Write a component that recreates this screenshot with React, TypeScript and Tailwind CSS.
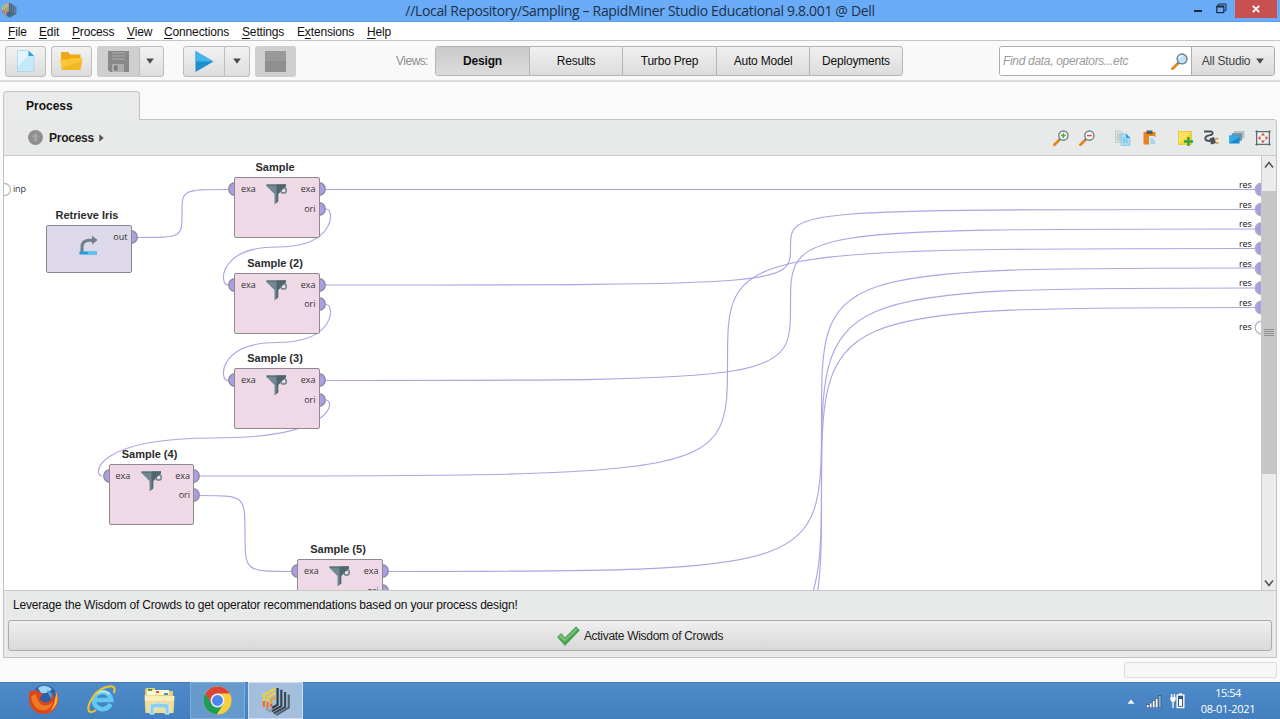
import React from "react";

type Port = { label: string; dy: number };

type NodeProps = {
  title: string;
  x: number;
  y: number;
  kind: "retrieve" | "sample";
};

function AppLogo({ size, dim }: { size: number; dim?: boolean }) {
  return (
    <svg width={size} height={size} viewBox="0 0 32 32" opacity={dim ? 0.85 : 1}>
      {dim && <path d="M16 1 L30 9 V23 L16 31 L2 23 V9 Z" fill="#7d98a8" opacity="0.7" />}
      <g fill="none" strokeWidth="2.3">
        <path d="M3 16 V9.5 L15.5 2.5" stroke="#f5d02c" />
        <path d="M3 16 V22.5" stroke="#ee6a25" />
        <path d="M7 17 V12 L15.5 7.2" stroke="#f7cf2a" />
        <path d="M7 17 V24" stroke="#ee7228" />
        <path d="M11 19 V14.6 L15.5 12" stroke="#f0a028" />
        <path d="M11 19 V22" stroke="#e8502c" />
        <path d="M17.7 2 V20 L12 23.5" stroke="#2c3843" />
        <path d="M21.7 4 V21.5 L11.5 27" stroke="#33414d" />
        <path d="M25.7 6.5 V22.5 L13.5 29.2" stroke="#3a4854" />
        <path d="M29.6 9 V23.2 L16 31" stroke="#55636f" />
      </g>
      <path d="M5 24.5 L11 28 M9 24 L12 25.5" stroke="#8c989f" strokeWidth="1.5" />
    </svg>
  );
}

function Magnifier({ size, sign }: { size: number; sign?: "plus" | "minus" }) {
  return (
    <svg width={size} height={size} viewBox="0 0 16 16">
      <path d="M1.4 14.8 L6.4 9.8" stroke="#e08a1e" strokeWidth="2.7" strokeLinecap="round" />
      <path d="M6 10.2 L7.6 8.6" stroke="#6b7d88" strokeWidth="1.6" />
      <circle cx="10.4" cy="5.6" r="4.6" fill={sign ? "#f4f7f6" : "#bfe3fa"} stroke="#71838d" strokeWidth="1.4" />
      {sign === "plus" && <path d="M10.4 3.2 V8 M8 5.6 H12.8" stroke="#55a63a" strokeWidth="1.5" />}
      {sign === "minus" && <path d="M8 5.6 H12.8" stroke="#e04a3c" strokeWidth="1.5" />}
      {!sign && <path d="M7.5 5 A3.2 3.2 0 0 1 11 2.6" stroke="#eef8ff" strokeWidth="1.3" fill="none" />}
    </svg>
  );
}

function Caret() {
  return (
    <svg width="8" height="6" viewBox="0 0 8 6">
      <path d="M0.2 0.5 H7.8 L4 5.7 Z" fill="#4a4a4a" />
    </svg>
  );
}

function Funnel() {
  return (
    <svg width="22" height="21" viewBox="0 0 22 21">
      <path d="M0.5 0.5 H20 V2 L12.2 10 V17.5 L8.5 20.5 V10 L0.5 2 Z" fill="#708991" />
      <path d="M10.5 0.5 H20 V2 L12.2 10 V17.5 L10.5 19 Z" fill="#50666f" />
      <path d="M0.5 0.5 H20 V2 H0.5 Z" fill="#5b737c" />
      <ellipse cx="17.6" cy="6.4" rx="2.7" ry="2.6" fill="#ecdde7" stroke="#6d838c" strokeWidth="1.5" />
      <path d="M11 0.8 H20 V2 L15.6 6.4 H11 Z" fill="#50666f" />
    </svg>
  );
}

function RetrieveGlyph() {
  return (
    <svg width="20" height="20" viewBox="0 0 20 20">
      <path d="M3 17 V12 Q3 5.5 10 5.2 H13" fill="none" stroke="#6b8089" strokeWidth="3" />
      <path d="M13 0.8 L18.6 5 L13 9.4 Z" fill="#6b8089" />
      <rect x="0.5" y="16.5" width="17.5" height="3" fill="#1f9ddc" />
      <rect x="9" y="16.5" width="9" height="3" fill="#5cc0ee" />
    </svg>
  );
}

function PortCap({ side }: { side: "left" | "right" }) {
  return (
    <svg width="8" height="14" viewBox="0 0 8 14">
      {side === "right" ? (
        <path d="M0 0.7 A6.3 6.3 0 0 1 0 13.3 Z" fill="#ab9fe2" stroke="#8d8896" strokeWidth="1.3" />
      ) : (
        <path d="M8 0.7 A6.3 6.3 0 0 0 8 13.3 Z" fill="#ab9fe2" stroke="#8d8896" strokeWidth="1.3" />
      )}
    </svg>
  );
}

function OperatorNode({ title, x, y, kind }: NodeProps) {
  const isSample = kind === "sample";
  const outputs: Port[] = isSample
    ? [
        { label: "exa", dy: 12 },
        { label: "ori", dy: 31.5 },
      ]
    : [{ label: "out", dy: 12 }];
  return (
    <div className="absolute" style={{ left: x, top: y }}>
      <div className="absolute -top-[17px] left-0 w-[82px] whitespace-nowrap text-center font-['Liberation_Sans',sans-serif] text-[11px] font-bold leading-[15px] text-[#2c2c2c]">
        {title}
      </div>
      {isSample && (
        <div className="absolute -left-[7px] top-[5px]">
          <PortCap side="left" />
        </div>
      )}
      {outputs.map((p) => (
        <div key={p.label} className="absolute left-[84.5px]" style={{ top: p.dy - 7 }}>
          <PortCap side="right" />
        </div>
      ))}
      <div
        className={
          isSample
            ? "relative h-[61px] w-[85.5px] rounded-[2px] border border-[#8f8890] bg-[#f0d9e6]"
            : "relative h-[47.5px] w-[85.5px] rounded-[2px] border border-[#8a8794] bg-[#ddd9ea]"
        }
      >
        {isSample && (
          <span className="absolute left-[6px] top-[5px] font-['Open_Sans',sans-serif] text-[9px] leading-[12px] text-[#333]">exa</span>
        )}
        {outputs.map((p) => (
          <span
            key={p.label}
            className="absolute right-[3px] font-['Open_Sans',sans-serif] text-[9px] leading-[12px] text-[#333]"
            style={{ top: p.dy - 7 }}
          >
            {p.label}
          </span>
        ))}
        <div className={isSample ? "absolute left-[31px] top-[6px]" : "absolute left-[32px] top-[9px]"}>
          {isSample ? <Funnel /> : <RetrieveGlyph />}
        </div>
      </div>
    </div>
  );
}

const nodes: NodeProps[] = [
  { title: "Retrieve Iris", x: 42, y: 69, kind: "retrieve" },
  { title: "Sample", x: 230, y: 21, kind: "sample" },
  { title: "Sample (2)", x: 230, y: 116.5, kind: "sample" },
  { title: "Sample (3)", x: 230, y: 212, kind: "sample" },
  { title: "Sample (4)", x: 104.5, y: 307.5, kind: "sample" },
  { title: "Sample (5)", x: 293, y: 403, kind: "sample" },
];

const resultPorts = [
  { y: 33, on: true },
  { y: 53, on: true },
  { y: 72.5, on: true },
  { y: 92, on: true },
  { y: 112, on: true },
  { y: 131.5, on: true },
  { y: 151, on: true },
  { y: 171, on: false },
];

function elbow(x1: number, y1: number, x2: number, y2: number) {
  const xm = (x1 + x2) / 2 - 0.5;
  const ym = (y1 + y2) / 2;
  return `M${x1} ${y1} C${xm} ${y1} ${xm} ${y1} ${xm} ${ym} C${xm} ${y2} ${xm} ${y2} ${x2} ${y2}`;
}

function loop(x1: number, y1: number, x2: number, y2: number) {
  const xm = (x1 + x2) / 2;
  const ym = (y1 + y2) / 2;
  return `M${x1} ${y1} C${x1 + 9} ${y1} ${x1 + 10} ${ym} ${xm} ${ym} C${x2 - 10} ${ym} ${x2 - 9} ${y2} ${x2} ${y2}`;
}

const wires = [
  elbow(133, 81.5, 224, 33.5),
  elbow(322, 33.5, 1252, 33.5),
  elbow(322, 129, 1252, 53.5),
  elbow(322, 224.5, 1252, 73),
  elbow(196, 320, 1252, 92.5),
  elbow(384, 415.5, 1252, 112),
  elbow(384, 509, 1252, 132),
  elbow(384, 529, 1252, 151.5),
  elbow(196, 339.5, 287, 415.5),
  loop(322, 53, 224, 129),
  loop(322, 148.5, 224, 224.5),
  loop(322, 244, 98, 320),
];

function Canvas() {
  return (
    <div className="relative h-full flex-1 overflow-hidden bg-white">
      <svg className="absolute left-0 top-0" width="1257" height="434" viewBox="0 0 1257 434">
        {wires.map((d) => (
          <path key={d} d={d} fill="none" stroke="#afa4e4" strokeWidth="1.15" />
        ))}
        <circle cx="0.5" cy="33.5" r="6" fill="#fff" stroke="#bcbcbc" strokeWidth="1.3" />
        {resultPorts.map((p) => (
          <circle key={p.y} cx="1257.5" cy={p.y + 0.5} r="6.3" fill={p.on ? "#aa9de2" : "#fff"} stroke="#b5b1bd" strokeWidth="1.3" />
        ))}
      </svg>
      <span className="absolute left-[9px] top-[27px] font-['Open_Sans',sans-serif] text-[9px] leading-[12px] tracking-[-0.2px] text-[#333]">inp</span>
      {resultPorts.map((p) => (
        <span
          key={p.y}
          className="absolute right-[9.5px] font-['Open_Sans',sans-serif] text-[9px] leading-[12px] tracking-[-0.2px] text-[#111]"
          style={{ top: p.on ? p.y - 10.5 : p.y - 6 }}
        >
          res
        </span>
      ))}
      {nodes.map((n) => (
        <OperatorNode key={n.title} {...n} />
      ))}
    </div>
  );
}

function Scrollbar() {
  return (
    <div className="flex h-full w-[15px] shrink-0 flex-col border-l border-[#c9c9c9] bg-[#e9eceb]">
      <div className="flex h-[35px] justify-center pt-[5px]">
        <svg width="10" height="8" viewBox="0 0 10 8">
          <path d="M1 6.5 L5 1.5 L9 6.5" fill="none" stroke="#555" strokeWidth="1.6" />
        </svg>
      </div>
      <div className="flex h-[283px] items-center justify-center bg-[#c5c6c6]">
        <div className="flex w-[10px] flex-col gap-px">
          <div className="h-px bg-[#929292]" />
          <div className="h-px bg-[#929292]" />
          <div className="h-px bg-[#929292]" />
          <div className="h-px bg-[#929292]" />
        </div>
      </div>
      <div className="flex flex-1 items-end justify-center pb-[3px]">
        <svg width="10" height="8" viewBox="0 0 10 8">
          <path d="M1 1.5 L5 6.5 L9 1.5" fill="none" stroke="#555" strokeWidth="1.6" />
        </svg>
      </div>
    </div>
  );
}

function TitleBar() {
  return (
    <div className="grid h-[22px] grid-cols-[1fr_auto_1fr] bg-[#6aabf7] shadow-[inset_0_-1px_0_#5f9fe8]">
      <div className="pl-[1px] pt-[2px]">
        <AppLogo size={16} dim />
      </div>
      <div className="whitespace-nowrap font-['Open_Sans',sans-serif] text-[14px] leading-[22px] tracking-[-0.33px] text-[#1d3148]">
        //Local Repository/Sampling – RapidMiner Studio Educational 9.8.001 @ Dell
      </div>
      <div className="flex items-start justify-end pr-[3px]">
        <div className="mr-[14px] mt-[10px] h-[2px] w-[8px] bg-[#1c2a3c]" />
        <svg className="mr-[8px] mt-[3px]" width="11" height="11" viewBox="0 0 11 11">
          <path d="M2.5 2.5 V1 H10 V7.5 H8.5" fill="none" stroke="#1c2a3c" strokeWidth="1" />
          <rect x="0.8" y="3.2" width="7" height="6.4" fill="none" stroke="#1c2a3c" strokeWidth="1.2" />
          <path d="M0.5 3.6 H8" stroke="#1c2a3c" strokeWidth="1.8" />
        </svg>
        <div className="flex h-[18px] w-[42px] items-center justify-center bg-[#c75050]">
          <svg width="8" height="8" viewBox="0 0 8 8">
            <path d="M0.8 0.8 L7.2 7.2 M7.2 0.8 L0.8 7.2" stroke="#fff" strokeWidth="1.8" />
          </svg>
        </div>
      </div>
    </div>
  );
}

const menus: { pre: string; key: string; post: string; cls: string }[] = [
  { pre: "", key: "F", post: "ile", cls: "w-[31px]" },
  { pre: "", key: "E", post: "dit", cls: "w-[33px]" },
  { pre: "", key: "P", post: "rocess", cls: "w-[55px]" },
  { pre: "", key: "V", post: "iew", cls: "w-[37px]" },
  { pre: "", key: "C", post: "onnections", cls: "w-[78px]" },
  { pre: "", key: "S", post: "ettings", cls: "w-[55px]" },
  { pre: "E", key: "x", post: "tensions", cls: "w-[70px]" },
  { pre: "", key: "H", post: "elp", cls: "w-[40px]" },
];

function MenuBar() {
  return (
    <div className="flex h-[19px] items-center border-b border-[#c6c6c6] bg-white pl-[8px] pt-px text-[12px] leading-[18px] tracking-[-0.15px] text-[#111]">
      {menus.map((m) => (
        <div key={m.key} className={m.cls}>
          {m.pre}
          <span className="underline underline-offset-[1.5px]">{m.key}</span>
          {m.post}
        </div>
      ))}
    </div>
  );
}

const views = [
  { name: "Design", cls: "w-[93px] bg-linear-to-b from-[#c9c9c9] to-[#dcdcdc] font-bold" },
  { name: "Results", cls: "w-[93px] border-l border-[#b5b5b5]" },
  { name: "Turbo Prep", cls: "w-[94px] border-l border-[#b5b5b5]" },
  { name: "Auto Model", cls: "w-[93px] border-l border-[#b5b5b5]" },
  { name: "Deployments", cls: "w-[93px] border-l border-[#b5b5b5]" },
];

function Toolbar() {
  const btn = "flex h-[31px] items-center justify-center rounded-[3px] border border-[#bdbdbd] bg-linear-to-b from-[#f2f2f2] to-[#dcdcdc]";
  return (
    <div className="flex h-[41px] items-center border-b-2 border-[#dcdcdc] bg-[#f9f9f9] pl-[5px] pt-px text-[12px]">
      <div className={btn + " mr-[5px] w-[41px]"}>
        <svg width="18" height="22" viewBox="0 0 18 22">
          <path d="M0.5 0.5 H11.5 L17 6 V21.5 H0.5 Z" fill="#c6e9fa" />
          <path d="M0.5 0.5 H11.5 L14 3 L0.5 17 Z" fill="#e2f4fc" />
          <path d="M0.5 0.5 H11.5 L17 6 V21.5 H0.5 Z" fill="none" stroke="#a4d3ea" strokeWidth="0.7" />
          <path d="M11.5 0.5 L17 6 H11.5 Z" fill="#2fa2dc" />
        </svg>
      </div>
      <div className={btn + " mr-[5px] w-[41px]"}>
        <svg width="23" height="20" viewBox="0 0 23 20">
          <path d="M1 1 H8 L10 3.5 H20.5 V12 H1 Z" fill="#f0a818" />
          <path d="M0 8.5 H9 L11 7 H22.5 L20.5 19 H2 Z" fill="#f9c737" />
          <path d="M1.6 17 L22 10 L20.5 19 H2 Z" fill="#f2b824" />
        </svg>
      </div>
      <div className="flex h-[31px] w-[42px] items-center justify-center rounded-l-[3px] bg-[#cfcfcf]">
        <svg width="21" height="21" viewBox="0 0 21 21">
          <path d="M0 0 H21 V21 H2 L0 19 Z" fill="#898989" />
          <rect x="4" y="1" width="13" height="8" fill="#9c9c9c" />
          <path d="M4 3.5 H17 M4 6.3 H17" stroke="#858585" />
          <rect x="4" y="13" width="12" height="8" fill="#adadad" />
          <rect x="6" y="14.5" width="3.5" height="5" fill="#7d7d7d" />
        </svg>
      </div>
      <div className="mr-[19px] flex h-[31px] w-[25px] items-center justify-center rounded-r-[3px] border border-[#bdbdbd] bg-linear-to-b from-[#f2f2f2] to-[#dedede] pr-[3px]">
        <Caret />
      </div>
      <div className="flex h-[31px] w-[42px] items-center justify-center rounded-l-[3px] border border-[#bdbdbd] bg-linear-to-b from-[#f2f2f2] to-[#dcdcdc]">
        <svg width="19" height="21" viewBox="0 0 19 21">
          <path d="M0.5 0 L18.5 10.5 L0.5 21 Z" fill="#1c8fcd" />
          <path d="M0.5 0 L18.5 10.5 H0.5 Z" fill="#46b4e8" />
        </svg>
      </div>
      <div className="mr-[5px] flex h-[31px] w-[25px] items-center justify-center rounded-r-[3px] border border-l-0 border-[#bdbdbd] bg-linear-to-b from-[#f2f2f2] to-[#dedede]">
        <Caret />
      </div>
      <div className="flex h-[31px] w-[41px] items-center justify-center rounded-[3px] bg-[#cfcfcf]">
        <div className="h-[21px] w-[21px] bg-linear-to-b from-[#999] from-50% to-[#8f8f8f] to-50%" />
      </div>
      <div className="ml-[100px] w-[39px] tracking-[-0.5px] text-[#8d8d8d]">Views:</div>
      <div className="flex h-[30px] overflow-hidden rounded-[3px] border border-[#b5b5b5] bg-linear-to-b from-[#f0f0f0] to-[#dcdcdc] tracking-[-0.2px] text-[#111]">
        {views.map((v) => (
          <div key={v.name} className={"flex items-center justify-center whitespace-nowrap pb-px " + v.cls}>
            {v.name}
          </div>
        ))}
      </div>
      <div className="ml-auto mr-[5px] flex h-[30px] w-[276px] overflow-hidden rounded-[3px] border border-[#adadad] tracking-[-0.32px]">
        <div className="flex flex-1 items-center justify-between bg-white pl-[3px] pr-[3px] italic text-[#9b9b9b]">
          <span>Find data, operators...etc</span>
          <Magnifier size={17} />
        </div>
        <div className="flex w-[83px] items-center justify-center gap-[6px] border-l border-[#adadad] bg-linear-to-b from-[#f0f0f0] to-[#dadada] pb-px text-[#444] tracking-[-0.2px]">
          All Studio
          <Caret />
        </div>
      </div>
    </div>
  );
}

function PanelHeader() {
  return (
    <div className="flex h-[36px] items-center border-b border-[#cacbcb] pl-[24px] pr-[5px]">
      <svg width="15" height="15" viewBox="0 0 15 15">
        <circle cx="7.5" cy="7.5" r="7.5" fill="#8f8f8f" />
        <path d="M7.5 3 L11.5 7.2 H9 V11.5 H6 V7.2 H3.5 Z" fill="#a5a5a5" />
      </svg>
      <span className="ml-[6px] text-[12px] font-bold tracking-[-0.25px] text-[#222]">Process</span>
      <svg className="ml-[5px]" width="5" height="8" viewBox="0 0 5 8">
        <path d="M0.3 0.3 L4.7 4 L0.3 7.7 Z" fill="#555" />
      </svg>
      <div className="ml-auto flex items-center">
        <div className="mr-[10px]"><Magnifier size={16} sign="plus" /></div>
        <div className="mr-[20px]"><Magnifier size={16} sign="minus" /></div>
        <svg className="mr-[12px]" width="16" height="16" viewBox="0 0 16 16">
          <path d="M0.5 1 H6 L8.5 3.5 V12.5 H0.5 Z" fill="#dfe5e7" stroke="#b9c3c7" strokeWidth="0.8" />
          <path d="M2 4 H6 M2 6 H6 M2 8 H6 M2 10 H6" stroke="#9daab0" strokeWidth="0.8" />
          <path d="M6 4 H11.5 L15 7.5 V15.5 H6 Z" fill="#a9dcf4" stroke="#7cc4e6" strokeWidth="0.7" />
          <path d="M11 3.7 L15.3 8 H11 Z" fill="#2b9fd8" />
          <path d="M7.5 8 H10 M7.5 10 H13 M7.5 12 H13" stroke="#5db4de" strokeWidth="0.8" />
        </svg>
        <svg className="mr-[21px]" width="14" height="16" viewBox="0 0 14 16">
          <rect x="0.5" y="2" width="12" height="12.5" fill="#e8821a" />
          <rect x="3.5" y="0.5" width="6" height="3.5" fill="#4e5e68" />
          <path d="M6 6 H11 L13.5 8.5 V15.5 H6 Z" fill="#d5ebf5" />
          <path d="M7.2 9 H10 M7.2 11 H12 M7.2 13 H12" stroke="#79b7d6" strokeWidth="0.9" />
        </svg>
        <svg className="mr-[10px]" width="15" height="16" viewBox="0 0 15 16">
          <rect x="0.5" y="1.5" width="13" height="13" fill="#f3d63a" stroke="#e3c11f" strokeWidth="0.7" />
          <path d="M1 14 L13 2 H1 Z" fill="#f8e260" />
          <path d="M10.5 7 V16 M6 11.5 H15" stroke="#2fa344" strokeWidth="2.4" />
        </svg>
        <svg className="mr-[10px]" width="16" height="16" viewBox="0 0 16 16">
          <path d="M1 1.5 H7.5 Q10 1.7 9.5 3.8 Q9 5 6 5.4 Q2.5 6 2.3 8.4 Q2.4 11 7 11" fill="none" stroke="#44525c" strokeWidth="1.9" />
          <path d="M6.5 8.5 L11 7 L13 13 L8 14.5 Z" fill="#44525c" />
          <path d="M11.8 9.3 L15.3 8.4 M12.7 12.6 L15.5 13.4" stroke="#e29a35" strokeWidth="1.7" />
        </svg>
        <svg className="mr-[10px]" width="16" height="15" viewBox="0 0 16 15">
          <path d="M5 1 H15.5 V8.5 H5 Z" fill="#b4c0c5" />
          <path d="M2.8 3.2 H13 V10.8 H2.8 Z" fill="#78919c" />
          <path d="M0.3 5.6 H10.6 V13.5 H0.3 Z" fill="#1689cf" />
          <path d="M0.3 5.6 H10.6 V7 L0.3 13 Z" fill="#35aae6" />
        </svg>
        <svg width="16" height="16" viewBox="0 0 16 16">
          <rect x="1.6" y="1.6" width="12.8" height="12.8" fill="#edf0ef" stroke="#5d6c75" strokeWidth="1.2" />
          <path d="M0 1.6 H16 M0 14.4 H16 M1.6 0 V16 M14.4 0 V16" stroke="#5d6c75" strokeWidth="0.7" />
          <path d="M8 2.8 L10 5.5 H6 Z M8 13.2 L10 10.5 H6 Z M2.8 8 L5.5 6 V10 Z M13.2 8 L10.5 6 V10 Z" fill="#dd4a3d" />
        </svg>
      </div>
    </div>
  );
}

function Firefox() {
  return (
    <svg width="31" height="31" viewBox="0 0 31 31">
      <circle cx="16.5" cy="13.5" r="12.5" fill="#2c5fa8" />
      <path d="M10 4 Q17 -1 24 5 Q20 10 13 9 Z" fill="#9fd4f0" />
      <path d="M19 6 Q26 8 25 16 Q20 12 19 6 Z" fill="#4a97cf" />
      <path d="M2 6 Q4 8 6 6.5 Q9 5 11 8 Q15 9 14.5 11 Q11 13 12.5 16 Q16 20 21 17.5 Q24.5 15 23.8 9 Q27 12 26.8 16 Q29 11 27.5 6.5 Q31.5 12 29.5 20 Q25.5 30.5 14.5 30 Q2.5 28.5 1 17 Q0.5 11 2 6 Z" fill="#d9481c" />
      <path d="M3 13 Q5 10 8 10.5 Q9 17 13 20.5 Q19 23.5 25 18 Q22 27 14 26.5 Q5 25 3 13 Z" fill="#ef7a22" />
      <path d="M27.5 7 Q31 13 28.5 20 Q26 25 22 27.5 Q27 20 27 15 Q28.5 11 27.5 7 Z" fill="#f7b733" />
    </svg>
  );
}

function Explorer() {
  return (
    <svg width="30" height="30" viewBox="0 0 30 30">
      <path d="M23.5 20 A8.6 8.6 0 1 1 24.2 16 H9" fill="none" stroke="#62c8f4" strokeWidth="4.6" />
      <path d="M8.2 10.4 Q15 4.5 22.5 10" fill="none" stroke="#c2ecfc" strokeWidth="1.7" />
      <path d="M27 9 Q29 2 23.5 2.3 Q13 3 6 13 Q-0.5 23 2 27 Q4 29.5 9 26" fill="none" stroke="#f0c52c" strokeWidth="2.1" />
    </svg>
  );
}

function Folder() {
  return (
    <svg width="31" height="28" viewBox="0 0 31 28">
      <path d="M1 3 L2 1 H11 V4 H29 V26 H2 Z" fill="#e7cd73" />
      <path d="M3 3 H25 V8 H3 Z" fill="#fff7d3" />
      <path d="M4 2 H8 V4 H4 Z" fill="#3da14e" />
      <path d="M12 4 H15 V6 H12 Z" fill="#d3603a" />
      <path d="M20 6 H24 V8 H20 Z" fill="#4591d2" />
      <path d="M0.5 8 H11 L13 6 L14 9 H30.5 L29.5 26 H1.5 Z" fill="#f1dd92" />
      <path d="M1 9 H30 V14 H1 Z" fill="#faedb9" />
      <path d="M6 17 Q15 15 25 17 V27 H21 V21 H10 V27 H6 Z" fill="#8fcdea" stroke="#c7ecf9" strokeWidth="1" />
    </svg>
  );
}

function Chrome() {
  return (
    <svg width="29" height="29" viewBox="0 0 29 29">
      <circle cx="14.5" cy="14.5" r="14" fill="#f9cf3c" />
      <path d="M14.5 14.5 L2.4 7.5 A14 14 0 0 1 26.7 7.6 H14.5 Z" fill="#db4437" />
      <path d="M2.4 7.5 A14 14 0 0 0 13.8 28.5 L20.5 18 L14.5 14.5 L8.5 17.9 Z" fill="#1e9d58" />
      <path d="M2.4 7.5 L8.5 18 L14.5 7.6 Z" fill="#db4437" />
      <path d="M2.4 7.5 L8.3 17.8 L5 20 L0.6 14 Z" fill="#1e9d58" />
      <circle cx="14.5" cy="14.5" r="6.9" fill="#f1f1f1" />
      <circle cx="14.5" cy="14.5" r="5.4" fill="#4a86ee" />
    </svg>
  );
}

function Taskbar() {
  return (
    <div className="flex h-[37px] items-stretch bg-linear-to-b from-[#4f8bc9] to-[#437fbf] shadow-[inset_0_1px_0_#4277b3]">
      <div className="flex w-[59px] items-center justify-end pb-[3px]"><Firefox /></div>
      <div className="flex w-[58px] items-center justify-end pb-[3px]"><Explorer /></div>
      <div className="flex w-[58px] items-center justify-end"><Folder /></div>
      <div className="ml-[15px] flex w-[55px] items-center justify-center border border-[#80addb] bg-[#6699cc]"><Chrome /></div>
      <div className="ml-[3px] flex w-[55px] items-center justify-center border border-[#c9dcf0] bg-[#a3bfdd]"><AppLogo size={30} /></div>
      <div className="ml-auto flex items-center">
        <svg className="mr-[11px] mt-[2px]" width="8" height="5" viewBox="0 0 8 5">
          <path d="M0.5 4.7 L4 0.5 L7.5 4.7 Z" fill="#f4f8fc" />
        </svg>
        <svg className="mr-[8px] mt-[2px]" width="16" height="13" viewBox="0 0 16 13">
          <g fill="#fff" stroke="#29486b" strokeWidth="0.5">
            <rect x="0.5" y="9.7" width="2.4" height="3" />
            <rect x="3.5" y="8" width="2.4" height="4.7" />
            <rect x="6.5" y="5.7" width="2.4" height="7" />
            <rect x="9.5" y="3.4" width="2.4" height="9.3" />
            <rect x="12.6" y="0.7" width="2.4" height="12" fill="#95afc9" />
          </g>
        </svg>
        <svg width="15" height="16" viewBox="0 0 15 16">
          <rect x="7.2" y="2" width="6.6" height="12.5" fill="#33587f" stroke="#fff" strokeWidth="1.4" />
          <rect x="9" y="6" width="3" height="7" fill="#fff" />
          <rect x="9" y="0.3" width="3" height="1.7" fill="#fff" />
          <path d="M1.6 1 V4 M4.4 1 V4 M3 8 V15" stroke="#fff" strokeWidth="1.3" />
          <path d="M0.4 4 H5.6 V7 L4 9 H2 L0.4 7 Z" fill="#fff" />
        </svg>
        <div className="ml-[16px] mr-[25px] w-[54px] whitespace-nowrap text-center font-['Open_Sans',sans-serif] text-[11px] leading-[16px] text-white">
          <div className="flex justify-center"><span className="tracking-[-0.5px]">15:54</span></div>
          <div className="flex justify-center"><span className="tracking-[-0.3px]">08-01-2021</span></div>
        </div>
      </div>
    </div>
  );
}

export default function App() {
  return (
    <div className="flex h-[719px] w-[1280px] flex-col overflow-hidden bg-[#fafafa] font-['Liberation_Sans',Arial,sans-serif]">
      <TitleBar />
      <MenuBar />
      <Toolbar />
      <div className="flex flex-1 flex-col px-[3px] pt-[9px]">
        <div className="relative z-10 -mb-px flex h-[29px] w-[137px] items-center rounded-t-[4px] border border-b-0 border-[#c2c3c3] bg-[#e9ebea] pl-[22px] text-[12px] font-bold text-[#111]">
          Process
        </div>
        <div className="flex h-[539px] flex-col rounded-tr-[3px] border border-[#c2c3c3] bg-[#e8eae9]">
          <PanelHeader />
          <div className="flex h-[434px] shrink-0">
            <Canvas />
            <Scrollbar />
          </div>
          <div className="flex flex-1 flex-col border-t border-[#c6c7c7] px-[4px]">
            <div className="flex h-[29px] items-center pb-[2px] pl-[5px] text-[12px] tracking-[-0.18px] text-[#111]">
              Leverage the Wisdom of Crowds to get operator recommendations based on your process design!
            </div>
            <div className="flex h-[31px] items-center justify-center gap-[4px] rounded-[3px] border border-[#ababab] bg-linear-to-b from-[#efefef] to-[#d9d9d9] text-[12px] tracking-[-0.3px] text-[#222]">
              <svg width="23" height="20" viewBox="0 0 23 20">
                <path d="M0.5 11 L4 7.5 L8 11.8 L19 0.8 L22.5 4.3 L8 19.5 Z" fill="#4aa54f" stroke="#3b8f43" strokeWidth="0.6" />
                <path d="M1.5 10.8 L4 8.6 L8 12.9 L19 2 L20.5 3.4 L8 15.6 Z" fill="#78c47a" />
              </svg>
              Activate Wisdom of Crowds
            </div>
          </div>
        </div>
        <div className="ml-auto mt-[4px] h-[16px] w-[153px] rounded-[2px] border border-[#dedede] bg-[#f7f7f7]" />
      </div>
      <Taskbar />
    </div>
  );
}
